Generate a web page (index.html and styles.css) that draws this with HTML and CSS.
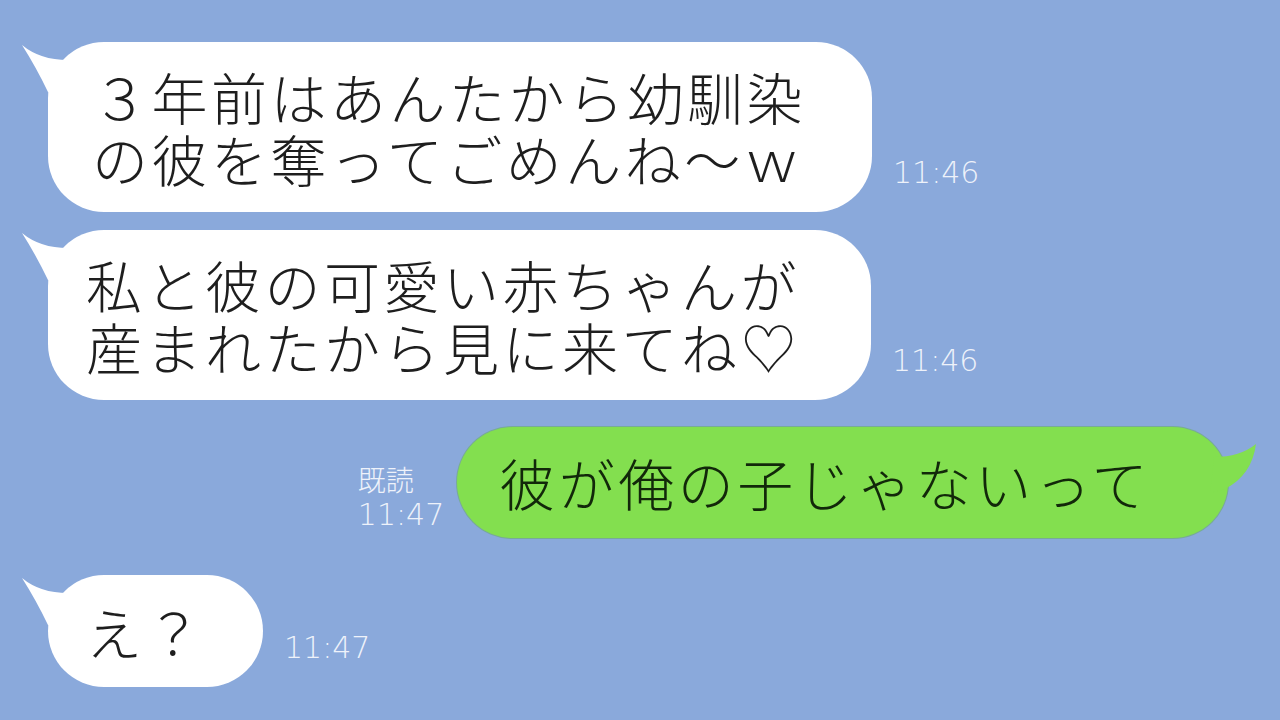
FILE: index.html
```html
<!DOCTYPE html>
<html lang="ja">
<head>
<meta charset="utf-8">
<title>LINE</title>
<link rel="stylesheet" href="styles.css">
</head>
<body>
<main class="chat">
  <div class="row row-in r1">
    <div class="bubble bubble-white b1">
      <svg class="tail tail-left" viewBox="0 0 50 60" width="50" height="60"><path d="M4 3 Q22 18 50 18 L50 58 L30 50 Q18 25 4 3 Z"/></svg>
      <p class="msg"><span class="line">３年前はあんたから幼馴染</span><span class="line">の彼を奪ってごめんね～ｗ</span></p>
    </div>
    <span class="time">11:46</span>
  </div>
  <div class="row row-in r2">
    <div class="bubble bubble-white b2">
      <svg class="tail tail-left" viewBox="0 0 50 60" width="50" height="60"><path d="M4 3 Q22 18 50 18 L50 58 L30 50 Q18 25 4 3 Z"/></svg>
      <p class="msg"><span class="line">私と彼の可愛い赤ちゃんが</span><span class="line">産まれたから見に来てね♡</span></p>
    </div>
    <span class="time">11:46</span>
  </div>
  <div class="row row-out r3">
    <div class="meta">
      <span class="read">既読</span>
      <span class="meta-time">11:47</span>
    </div>
    <div class="bubble bubble-green b3">
      <svg class="tail tail-right" viewBox="0 0 50 70" width="50" height="70"><path d="M46 17 Q30 30 4 30 L0 66 L15 62 Q42 48 46 17 Z"/></svg>
      <p class="msg"><span class="line">彼が俺の子じゃないって</span></p>
    </div>
  </div>
  <div class="row row-in r4">
    <div class="bubble bubble-white b4">
      <svg class="tail tail-left" viewBox="0 0 50 60" width="50" height="60"><path d="M4 3 Q22 18 50 18 L50 58 L30 50 Q18 25 4 3 Z"/></svg>
      <p class="msg"><span class="line">え？</span></p>
    </div>
    <span class="time">11:47</span>
  </div>
</main>
</body>
</html>
```
FILE: styles.css
```css
html, body {
  margin: 0;
  padding: 0;
}
body {
  width: 1280px;
  height: 720px;
  overflow: hidden;
  background: #8aa9db;
  font-family: "Noto Sans CJK JP", "Noto Sans", sans-serif;
}
.chat {
  display: flex;
  flex-direction: column;
  padding-top: 42px;
}
.row {
  display: flex;
  align-items: flex-end;
}
.row-in {
  padding-left: 48px;
}
.row-out {
  justify-content: flex-end;
  padding-right: 52px;
}
.r2 { margin-top: 18px; }
.r3 { margin-top: 27px; }
.r4 { margin-top: 37px; }

.bubble {
  position: relative;
  border-radius: 56px;
}
.bubble-white {
  background: #ffffff;
  color: #1e1e1e;
}
.bubble-green {
  background: #83df4f;
  color: #12280a;
  box-shadow: 0 0 0 1px rgba(98, 170, 70, 0.45);
}
.tail {
  position: absolute;
  top: 0;
  display: block;
}
.tail-left {
  left: -30px;
  fill: #ffffff;
}
.tail-right {
  right: -32px;
  fill: #83df4f;
}
.msg {
  position: relative;
  margin: 0;
  display: flex;
  flex-direction: column;
  font-size: 56px;
  letter-spacing: 3.5px;
  font-weight: 300;
  white-space: nowrap;
}
.line {
  display: block;
  height: 62px;
  line-height: 62px;
}
.b1 { padding: 23px 66px 23px 44px; }
.b2 { padding: 23px 71px 23px 38px; }
.b3 { padding: 24px 77px 25px 42px; }
.b4 { padding: 25px 58px 25px 38px; }

.time {
  font-family: "DejaVu Sans", sans-serif;
  font-weight: 200;
  font-size: 30px;
  line-height: 30px;
  color: #eef2fa;
  margin-left: 21px;
  margin-bottom: 24px;
}
.meta {
  display: flex;
  flex-direction: column;
  margin-right: 13px;
  margin-bottom: 5px;
  color: #eef2fa;
}
.read {
  font-size: 28px;
  font-weight: 300;
  line-height: 36px;
}
.meta-time {
  font-family: "DejaVu Sans", sans-serif;
  font-weight: 200;
  font-size: 30px;
  line-height: 36px;
}
```
